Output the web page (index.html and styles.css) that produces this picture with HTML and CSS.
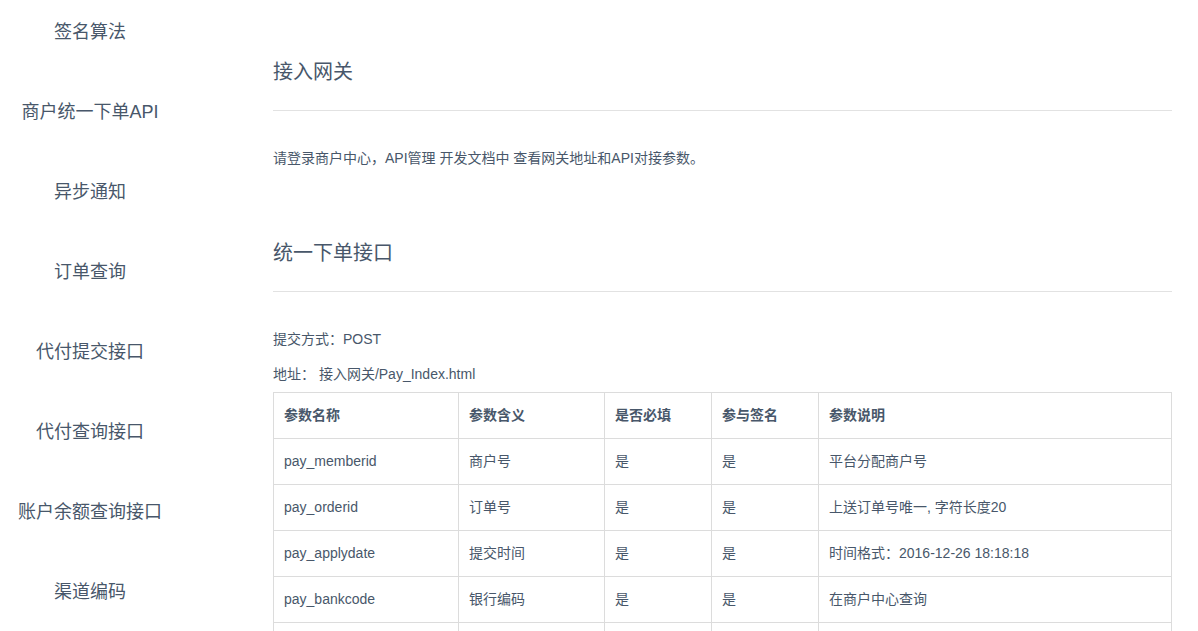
FILE: index.html
```html
<!DOCTYPE html>
<html lang="zh-CN">
<head>
    <meta charset="UTF-8">
    <title>API文档</title>
    <link rel="stylesheet" href="styles.css">
</head>
<body>

<div class="page">
    <!-- left menu -->
    <ul class="sidebar">
        <li>签名算法</li>
        <li>商户统一下单API</li>
        <li>异步通知</li>
        <li>订单查询</li>
        <li>代付提交接口</li>
        <li>代付查询接口</li>
        <li>账户余额查询接口</li>
        <li>渠道编码</li>
    </ul>

    <div class="main">
        <h2 class="title">接入网关</h2>
        <p class="intro">请登录商户中心，API管理 开发文档中 查看网关地址和API对接参数。</p>

        <h2 class="title second">统一下单接口</h2>
        <p class="line first">提交方式：POST</p>
        <p class="line">地址： 接入网关/Pay_Index.html</p>

        <table class="params">
            <colgroup>
                <col style="width:185px">
                <col style="width:146px">
                <col style="width:107px">
                <col style="width:107px">
                <col>
            </colgroup>
            <tr>
                <th>参数名称</th>
                <th>参数含义</th>
                <th>是否必填</th>
                <th>参与签名</th>
                <th>参数说明</th>
            </tr>
            <tr><td>pay_memberid</td><td>商户号</td><td>是</td><td>是</td><td>平台分配商户号</td></tr>
            <tr><td>pay_orderid</td><td>订单号</td><td>是</td><td>是</td><td>上送订单号唯一, 字符长度20</td></tr>
            <tr><td>pay_applydate</td><td>提交时间</td><td>是</td><td>是</td><td>时间格式：2016-12-26 18:18:18</td></tr>
            <tr><td>pay_bankcode</td><td>银行编码</td><td>是</td><td>是</td><td>在商户中心查询</td></tr>
            <!-- next row starts at the fold -->
            <tr class="empty"><td></td><td></td><td></td><td></td><td></td></tr>
        </table>
    </div>
</div>

</body>
</html>
```

FILE: styles.css
```css
html, body {
    margin: 0;
    height: 100%;
    overflow: hidden;
}
body {
    font-family: "Liberation Sans", "Noto Sans CJK SC", sans-serif;
    color: #48576a;
    background: #fff;
}
.page {
    display: grid;
    grid-template-columns: 180px 1fr;
}
.sidebar {
    list-style: none;
    margin: 0;
    padding: 12px 0 0 0;
}
.sidebar li {
    font-size: 18px;
    line-height: 40px;
    height: 40px;
    margin-bottom: 40px;
    text-align: center;
}
.main {
    padding: 58px 26px 0 93px;
}
.title {
    margin: 0;
    font-size: 20px;
    font-weight: normal;
    line-height: 28px;
    padding-bottom: 24px;
    border-bottom: 1px solid #e2e2e2;
}
.title.second {
    margin-top: 71px;
}
.intro {
    margin: 37px 0 0 0;
    font-size: 14px;
    line-height: 20px;
}
.line {
    margin: 15px 0 0 0;
    font-size: 14px;
    line-height: 20px;
}
.line.first {
    margin-top: 37px;
}
.params {
    margin-top: 8px;
    width: 100%;
    border-collapse: collapse;
    font-size: 14px;
}
.params th, .params td {
    border: 1px solid #dcdcdc;
    padding: 12px 10px;
    line-height: 21px;
    text-align: left;
}
.params th {
    font-weight: bold;
}
```
